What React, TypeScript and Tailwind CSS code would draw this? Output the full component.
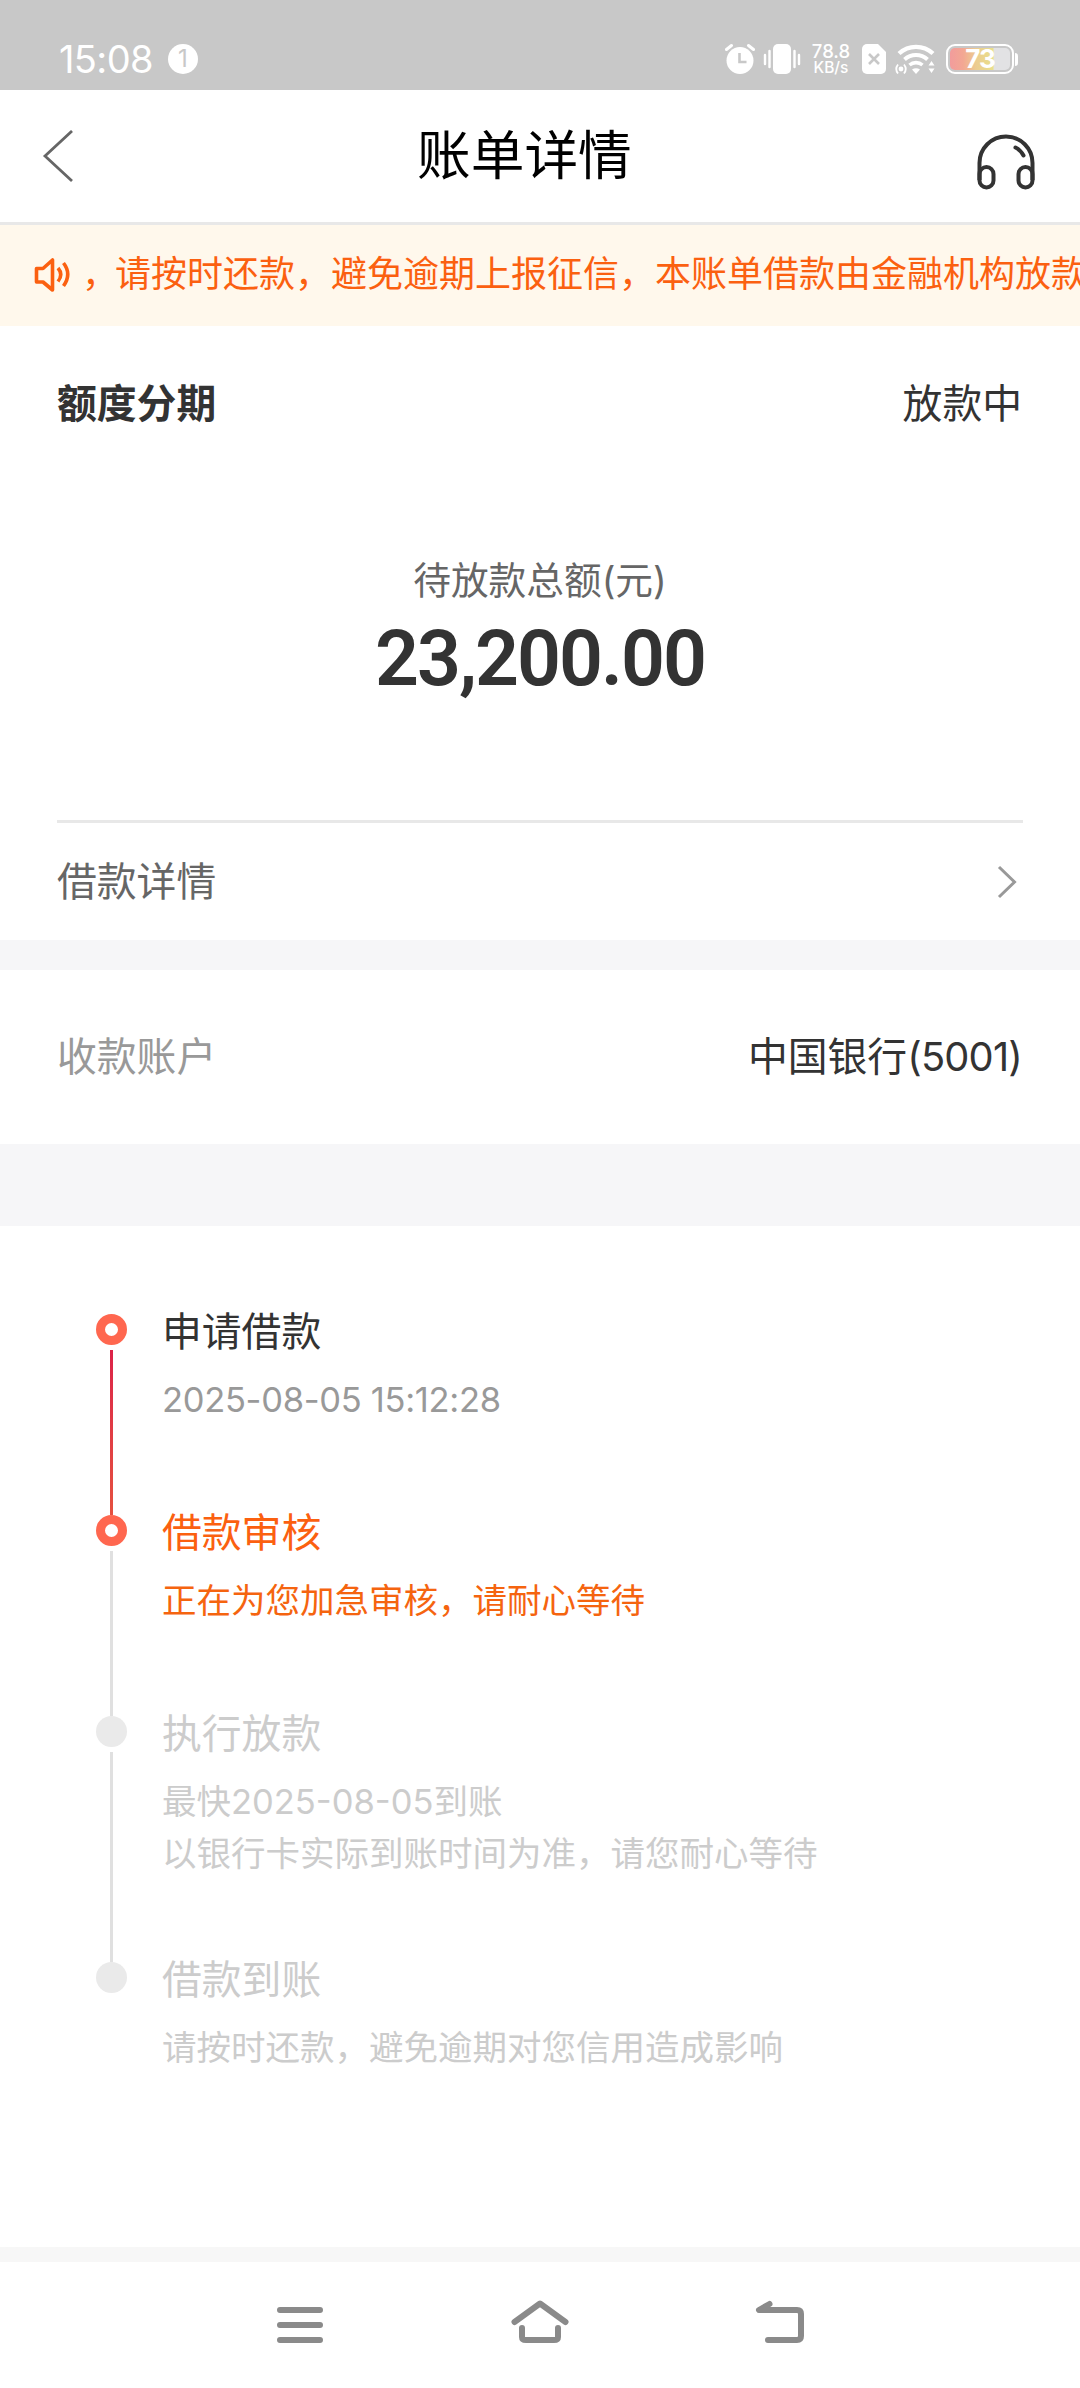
interface Step {
  title: string;
  lines: string[];
  state: "done" | "current" | "pending";
  height: string;
}

const steps: Step[] = [
  { title: "申请借款", lines: ["2025-08-05 15:12:28"], state: "done", height: "h-[201px]" },
  { title: "借款审核", lines: ["正在为您加急审核，请耐心等待"], state: "current", height: "h-[201px]" },
  {
    title: "执行放款",
    lines: ["最快2025-08-05到账", "以银行卡实际到账时间为准，请您耐心等待"],
    state: "pending",
    height: "h-[246px]",
  },
  { title: "借款到账", lines: ["请按时还款，避免逾期对您信用造成影响"], state: "pending", height: "h-[150px]" },
];

const titleColor = {
  done: "text-[#333]",
  current: "text-[#fb6010]",
  pending: "text-[#ccc]",
};

const textColor = {
  done: "text-[#999] tracking-[-0.3px]",
  current: "text-[#f5640f]",
  pending: "text-[#ccc]",
};

function StatusBar() {
  return (
    <div className="flex h-[90px] items-center bg-[#c8c8c8] pt-[28px] pl-[59px] text-white">
      <span className="w-[109px] text-[38px] leading-[38px] tracking-[-0.6px]">15:08</span>
      <span className="flex size-[30px] items-center justify-center rounded-full bg-white text-[24px] leading-none text-[#c8c8c8]">
        1
      </span>
      <div className="ml-auto flex h-[32px] w-[355px] items-center">
        {/* alarm */}
        <svg width="30" height="32" viewBox="0 0 30 32" fill="none">
          <circle cx="15" cy="17.5" r="13.5" fill="#fff" />
          <path d="M1.5 6.5 6.5 2.5M28.5 6.5 23.5 2.5" stroke="#fff" strokeWidth="3" strokeLinecap="round" />
          <path d="M14.5 10v9h7" stroke="#c8c8c8" strokeWidth="2.6" />
        </svg>
        {/* vibrate */}
        <svg className="ml-[8px]" width="38" height="32" viewBox="0 0 38 32">
          <rect x="10" y="1" width="18" height="30" rx="5" fill="#fff" />
          <path d="M2 12v9M6.5 8v16M36 12v9M31.5 8v16" stroke="#fff" strokeWidth="2.4" strokeLinecap="round" />
        </svg>
        <div className="ml-[11px] flex w-[38px] flex-col items-center text-center font-medium">
          <span className="text-[18.5px] leading-[17px]">78.8</span>
          <span className="text-[15.5px] leading-[16px]">KB/s</span>
        </div>
        {/* no sim */}
        <svg className="ml-[12px]" width="24" height="32" viewBox="0 0 24 32">
          <path d="M5 1h11l8 8v17a5 5 0 0 1-5 5H5a5 5 0 0 1-5-5V6a5 5 0 0 1 5-5Z" fill="#fff" />
          <path d="m7 11 10 10M17 11 7 21" stroke="#c8c8c8" strokeWidth="2.6" />
        </svg>
        {/* wifi */}
        <svg className="ml-[9px]" width="40" height="32" viewBox="0 0 40 32" fill="none">
          <path d="M4 10.500a25 25 0 0 1 34 0" stroke="#fff" strokeWidth="4.4" />
          <path d="M9.500 16.500a17 17 0 0 1 23 0" stroke="#fff" strokeWidth="4" />
          <path d="M14.500 22a10 10 0 0 1 13 0" stroke="#fff" strokeWidth="3.6" />
          <path d="M17 26.500q4-2.500 8 0l-4 4.500Z" fill="#fff" />
          <path d="M36.500 18l3 4.500h-6zM36.500 30l3-4.500h-6z" fill="#fff" />
          <circle cx="6" cy="26" r="2.4" fill="#fff" />
          <path d="M3 21.500q-3.500 4.500 0 9M9 21.500q3.500 4.500 0 9" stroke="#fff" strokeWidth="1.8" />
        </svg>
        {/* battery */}
        <div className="ml-[11px] flex items-center gap-[1px]">
          <div className="flex h-[30px] w-[68px] items-center rounded-[9px] border-2 border-white p-[2px]">
            <div className="flex h-[22px] w-full items-center justify-center rounded-[5px] bg-[linear-gradient(90deg,#f29c9c_0%,#f3a793_22%,#eccb90_42%,#e9e08c_72%,#e2e2e4_73%)] text-[26px] leading-[30px] font-bold tracking-[-1px]">
              73
            </div>
          </div>
          <span className="h-[13px] w-[3px] rounded-r-[3px] bg-white" />
        </div>
      </div>
    </div>
  );
}

function Header() {
  return (
    <header className="flex h-[135px] items-start border-b-[3px] border-[#e8e8e8] bg-white pt-[40px] pl-[41px]">
      <svg width="34" height="54" viewBox="0 0 34 54" fill="none">
        <path d="M31 1 4 26l27 25" stroke="#666" strokeWidth="2.8" />
      </svg>
      <h1 className="-mt-[4px] ml-[342px] w-[216px] text-[53.7px] leading-[60px] text-black">账单详情</h1>
      <svg className="mt-[2px] ml-[342px]" width="62" height="60" viewBox="0 0 62 60" fill="none" stroke="#333" strokeWidth="4">
        <path d="M4.500 48V31a26.500 26.500 0 0 1 53 0v17" />
        <rect x="4.500" y="35" width="14" height="20.500" rx="7" />
        <rect x="43.500" y="35" width="14" height="20.500" rx="7" />
        <path d="M40.500 15.500q5 2.500 8 8" strokeLinecap="round" />
      </svg>
    </header>
  );
}

function Notice() {
  return (
    <div className="flex h-[101px] items-center overflow-hidden bg-[#fff8ec] pl-[33px] text-[#fb6010]">
      <svg className="-mt-[2px] shrink-0" width="40" height="36" viewBox="0 0 40 36" fill="none" stroke="#fb6010" strokeWidth="3.6">
        <path d="M3.500 11.500H10l9.500-8.500v30L10 25H3.500Z" strokeLinejoin="round" />
        <path d="M25 11q5.500 6.500 0 13.500M30.500 6q8.500 11 0 23" />
      </svg>
      <p className="-mt-[3px] ml-[6px] text-[36px] leading-[50px] whitespace-nowrap">
        <span className="relative left-[3px]">，</span>请按时还款，避免逾期上报征信，本账单借款由金融机构放款
      </p>
    </div>
  );
}

function Timeline() {
  return (
    <ol className="flex h-[1021px] shrink-0 flex-col bg-white pt-[88px] pl-[96px]">
      {steps.map((step, i) => (
        <li key={step.title} className={`flex ${step.height}`}>
          <div className="flex w-[31px] shrink-0 flex-col items-center">
            {step.state === "pending" ? (
              <span className="size-[31px] shrink-0 rounded-full bg-[#eaeaea]" />
            ) : (
              <span className="size-[31px] shrink-0 rounded-full border-[9px] border-[#ff674f] bg-white" />
            )}
            {i < steps.length - 1 && (
              <span
                className={`mt-[5px] w-[3px] grow ${
                  step.state === "done" ? "bg-linear-to-b from-[#dc2148] to-[#e5503f]" : "bg-[#e0e0e0]"
                }`}
              />
            )}
          </div>
          <div className="ml-[35px]">
            <h3 className={`mt-[-12px] text-[39.8px] leading-[60px] ${titleColor[step.state]}`}>{step.title}</h3>
            <div className={`mt-[12px] text-[34.5px] leading-[52px] whitespace-nowrap ${textColor[step.state]}`}>
              {step.lines.map((line) => (
                <p key={line}>{line}</p>
              ))}
            </div>
          </div>
        </li>
      ))}
    </ol>
  );
}

function NavBar() {
  return (
    <nav className="flex h-[126px] shrink-0 items-start bg-white pt-[36px] pl-[275px]">
      <svg width="50" height="50" viewBox="0 0 50 50" stroke="#8a8a8a" strokeWidth="6" strokeLinecap="round">
        <path d="M5 12h40M5 27h40M5 42h40" />
      </svg>
      <svg className="ml-[185px]" width="60" height="50" viewBox="0 0 60 50" fill="none" stroke="#8a8a8a" strokeWidth="6" strokeLinecap="round" strokeLinejoin="round">
        <path d="M4.500 24 30 5.500 55.500 24" />
        <path d="M12 30v9q0 3 4 3h28q4 0 4-3v-9" />
      </svg>
      <svg className="ml-[183px]" width="54" height="50" viewBox="0 0 54 50" fill="none" stroke="#8a8a8a" strokeWidth="6" strokeLinecap="round" strokeLinejoin="round">
        <path d="M16.500 6 6 12h38q4 0 4 4v22q0 4-4 4H15" />
      </svg>
    </nav>
  );
}

export default function App() {
  return (
    <div className="flex h-[2388px] w-[1080px] flex-col overflow-hidden bg-[#f6f6f8] font-['Inter','Noto_Sans_CJK_SC',sans-serif]">
      <StatusBar />
      <Header />
      <Notice />

      <section className="flex h-[614px] flex-col bg-white px-[57px] text-[#333]">
        <div className="mt-[48px] flex h-[60px] items-center justify-between text-[39.8px]">
          <h2 className="font-bold">额度分期</h2>
          <span className="mr-[1px]">放款中</span>
        </div>
        <p className="mt-[116px] text-center text-[37.7px] leading-[60px] text-[#666]">待放款总额(元)</p>
        <p className="mt-[9px] text-center font-['Roboto',sans-serif] text-[77px] leading-[80px] font-semibold tracking-[-2px]">
          23,200.00
        </p>
        <div className="mt-auto flex h-[120px] items-center justify-between border-t-[3px] border-[#e8e8e8] text-[39.8px] text-[#666]">
          <span>借款详情</span>
          <svg className="mr-[5px]" width="22" height="36" viewBox="0 0 22 36" fill="none">
            <path d="M3 3 18.500 18 3 33" stroke="#999" strokeWidth="3" />
          </svg>
        </div>
      </section>

      <section className="mt-[30px] mb-[82px] flex h-[174px] shrink-0 items-center justify-between bg-white px-[57px] text-[39.8px]">
        <span className="text-[#999]">收款账户</span>
        <span className="mr-[1px] text-[#333]">
          中国银行<span className="tracking-[-0.8px]">(5001)</span>
        </span>
      </section>

      <Timeline />
      <div className="h-[15px] shrink-0 bg-[#f7f7f7]" />
      <NavBar />
    </div>
  );
}
